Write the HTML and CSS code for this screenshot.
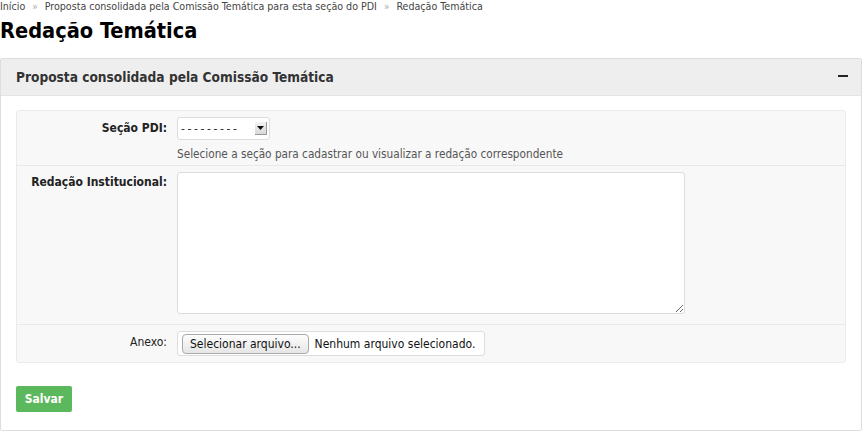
FILE: index.html
```html
<!DOCTYPE html>
<html lang="pt-BR">
<head>
<meta charset="utf-8">
<title>Redação Temática</title>
<link rel="stylesheet" href="styles.css">
</head>
<body>
<div class="breadcrumb">
  <a href="#">Início</a><span class="sep">»</span><a href="#">Proposta consolidada pela Comissão Temática para esta seção do PDI</a><span class="sep">»</span><span class="current">Redação Temática</span>
</div>
<h1 class="title">Redação Temática</h1>
<div class="panel">
  <div class="panel-head">
    <h2 class="panel-title">Proposta consolidada pela Comissão Temática</h2>
    <span class="collapse"></span>
  </div>
  <form class="panel-body">
    <div class="fieldset">
      <div class="row">
        <label class="label strong">Seção PDI:</label>
        <div class="field">
          <span class="select">
            <select class="select-native"><option>---------</option></select>
            <span class="select-arrow"><svg width="7" height="4" viewBox="0 0 7 4"><path d="M0 0h7L3.5 4z" fill="#111"/></svg></span>
          </span>
          <p class="help">Selecione a seção para cadastrar ou visualizar a redação correspondente</p>
        </div>
      </div>
      <div class="row">
        <label class="label strong">Redação Institucional:</label>
        <div class="field">
          <textarea class="textarea"></textarea>
        </div>
      </div>
      <div class="row last">
        <label class="label">Anexo:</label>
        <div class="field">
          <span class="file">
            <button type="button" class="file-btn">Selecionar arquivo...</button>
            <span class="file-name">Nenhum arquivo selecionado.</span>
          </span>
        </div>
      </div>
    </div>
    <div class="actions">
      <button type="button" class="btn-save">Salvar</button>
    </div>
  </form>
</div>
</body>
</html>
```

FILE: styles.css
```css
html, body {
  margin: 0;
  padding: 0;
  background: #fff;
}
body {
  font-family: "DejaVu Sans Condensed", "DejaVu Sans", Verdana, sans-serif;
  font-size: 12px;
  color: #333;
  width: 863px;
}
.breadcrumb {
  height: 14px;
  line-height: 13px;
  font-size: 10.6px;
  color: #444;
  white-space: nowrap;
}
.breadcrumb a {
  color: #444;
  text-decoration: none;
}
.breadcrumb .sep {
  color: #aaa;
  margin: 0 7px;
  font-size: 10px;
}
.title {
  margin: 3px 0 0;
  font-size: 21.6px;
  line-height: 28px;
  height: 41px;
  color: #000;
  font-weight: bold;
}
.panel {
  width: 860px;
  border: 1px solid #ddd;
  border-radius: 2px;
  height: 371px;
  box-sizing: content-box;
}
.panel-head {
  background: #eee;
  height: 36px;
  display: flex;
  align-items: center;
  justify-content: space-between;
  padding: 0 13px 0 15px;
  border-bottom: 1px solid #e4e4e4;
}
.panel-title {
  margin: 0;
  font-size: 13.6px;
  font-weight: bold;
  color: #333;
}
.collapse {
  width: 10px;
  height: 2px;
  background: #222;
  margin-top: -2px;
}
.panel-body {
  padding: 14px 15px 0;
  margin: 0;
}
.fieldset {
  background: #f8f8f8;
  border: 1px solid #ebebeb;
  border-radius: 3px;
  height: 251px;
}
.row {
  display: flex;
  border-bottom: 1px solid #e9e9e9;
  padding: 6px 0 8px;
}
.row:nth-child(1) { height: 40px; }
.row:nth-child(2) { height: 144px; }
.row.last { border-bottom: 0; padding-top: 6px; }
.label {
  width: 150px;
  flex: none;
  text-align: right;
  padding-right: 10px;
  line-height: 23px;
  color: #222;
}
.label.strong {
  font-weight: bold;
}
.row:nth-child(2) .label { line-height: 20px; }
.field {
  flex: 1;
}
.select {
  display: inline-flex;
  align-items: center;
  width: 93px;
  height: 23px;
  border: 1px solid #ddd;
  border-radius: 3px;
  background: #fff;
  box-sizing: border-box;
}
.select-native {
  appearance: none;
  -webkit-appearance: none;
  border: 0;
  background: transparent;
  font: inherit;
  font-size: 12px;
  letter-spacing: 2.6px;
  color: #333;
  flex: 1;
  min-width: 0;
  padding: 0 0 0 3px;
  height: 20px;
  outline: none;
}
.select-arrow {
  width: 12px;
  height: 13px;
  background: linear-gradient(#f4f4f4, #d8d8d8);
  border-right: 1px solid #999;
  border-bottom: 1px solid #999;
  display: flex;
  align-items: center;
  justify-content: center;
  margin-right: 2px;
  box-sizing: border-box;
  flex: none;
}
.help {
  margin: 7px 0 0;
  color: #555;
  line-height: 14px;
  font-size: 11.7px;
}
.textarea {
  display: block;
  width: 508px;
  height: 142px;
  box-sizing: border-box;
  border: 1px solid #ddd;
  border-radius: 3px;
  background: #fff;
  margin: 0;
  resize: both;
}
.file {
  display: inline-flex;
  align-items: center;
  gap: 6px;
  width: 308px;
  height: 25px;
  box-sizing: border-box;
  border: 1px solid #ddd;
  border-radius: 3px;
  background: #fff;
  padding: 0 4px;
}
.file-btn {
  font: inherit;
  font-size: 12px;
  height: 20px;
  padding: 0 7px;
  border: 1px solid #aaa;
  border-radius: 4px;
  background: linear-gradient(#fdfdfd, #e6e6e6);
  color: #111;
  line-height: 18px;
}
.file-name {
  color: #111;
}
.actions {
  padding-top: 23px;
}
.btn-save {
  background: #5cb85c;
  border: 0;
  border-radius: 2px;
  color: #fff;
  font: inherit;
  font-weight: bold;
  font-size: 12px;
  width: 56px;
  height: 26px;
  padding: 0;
}
```
